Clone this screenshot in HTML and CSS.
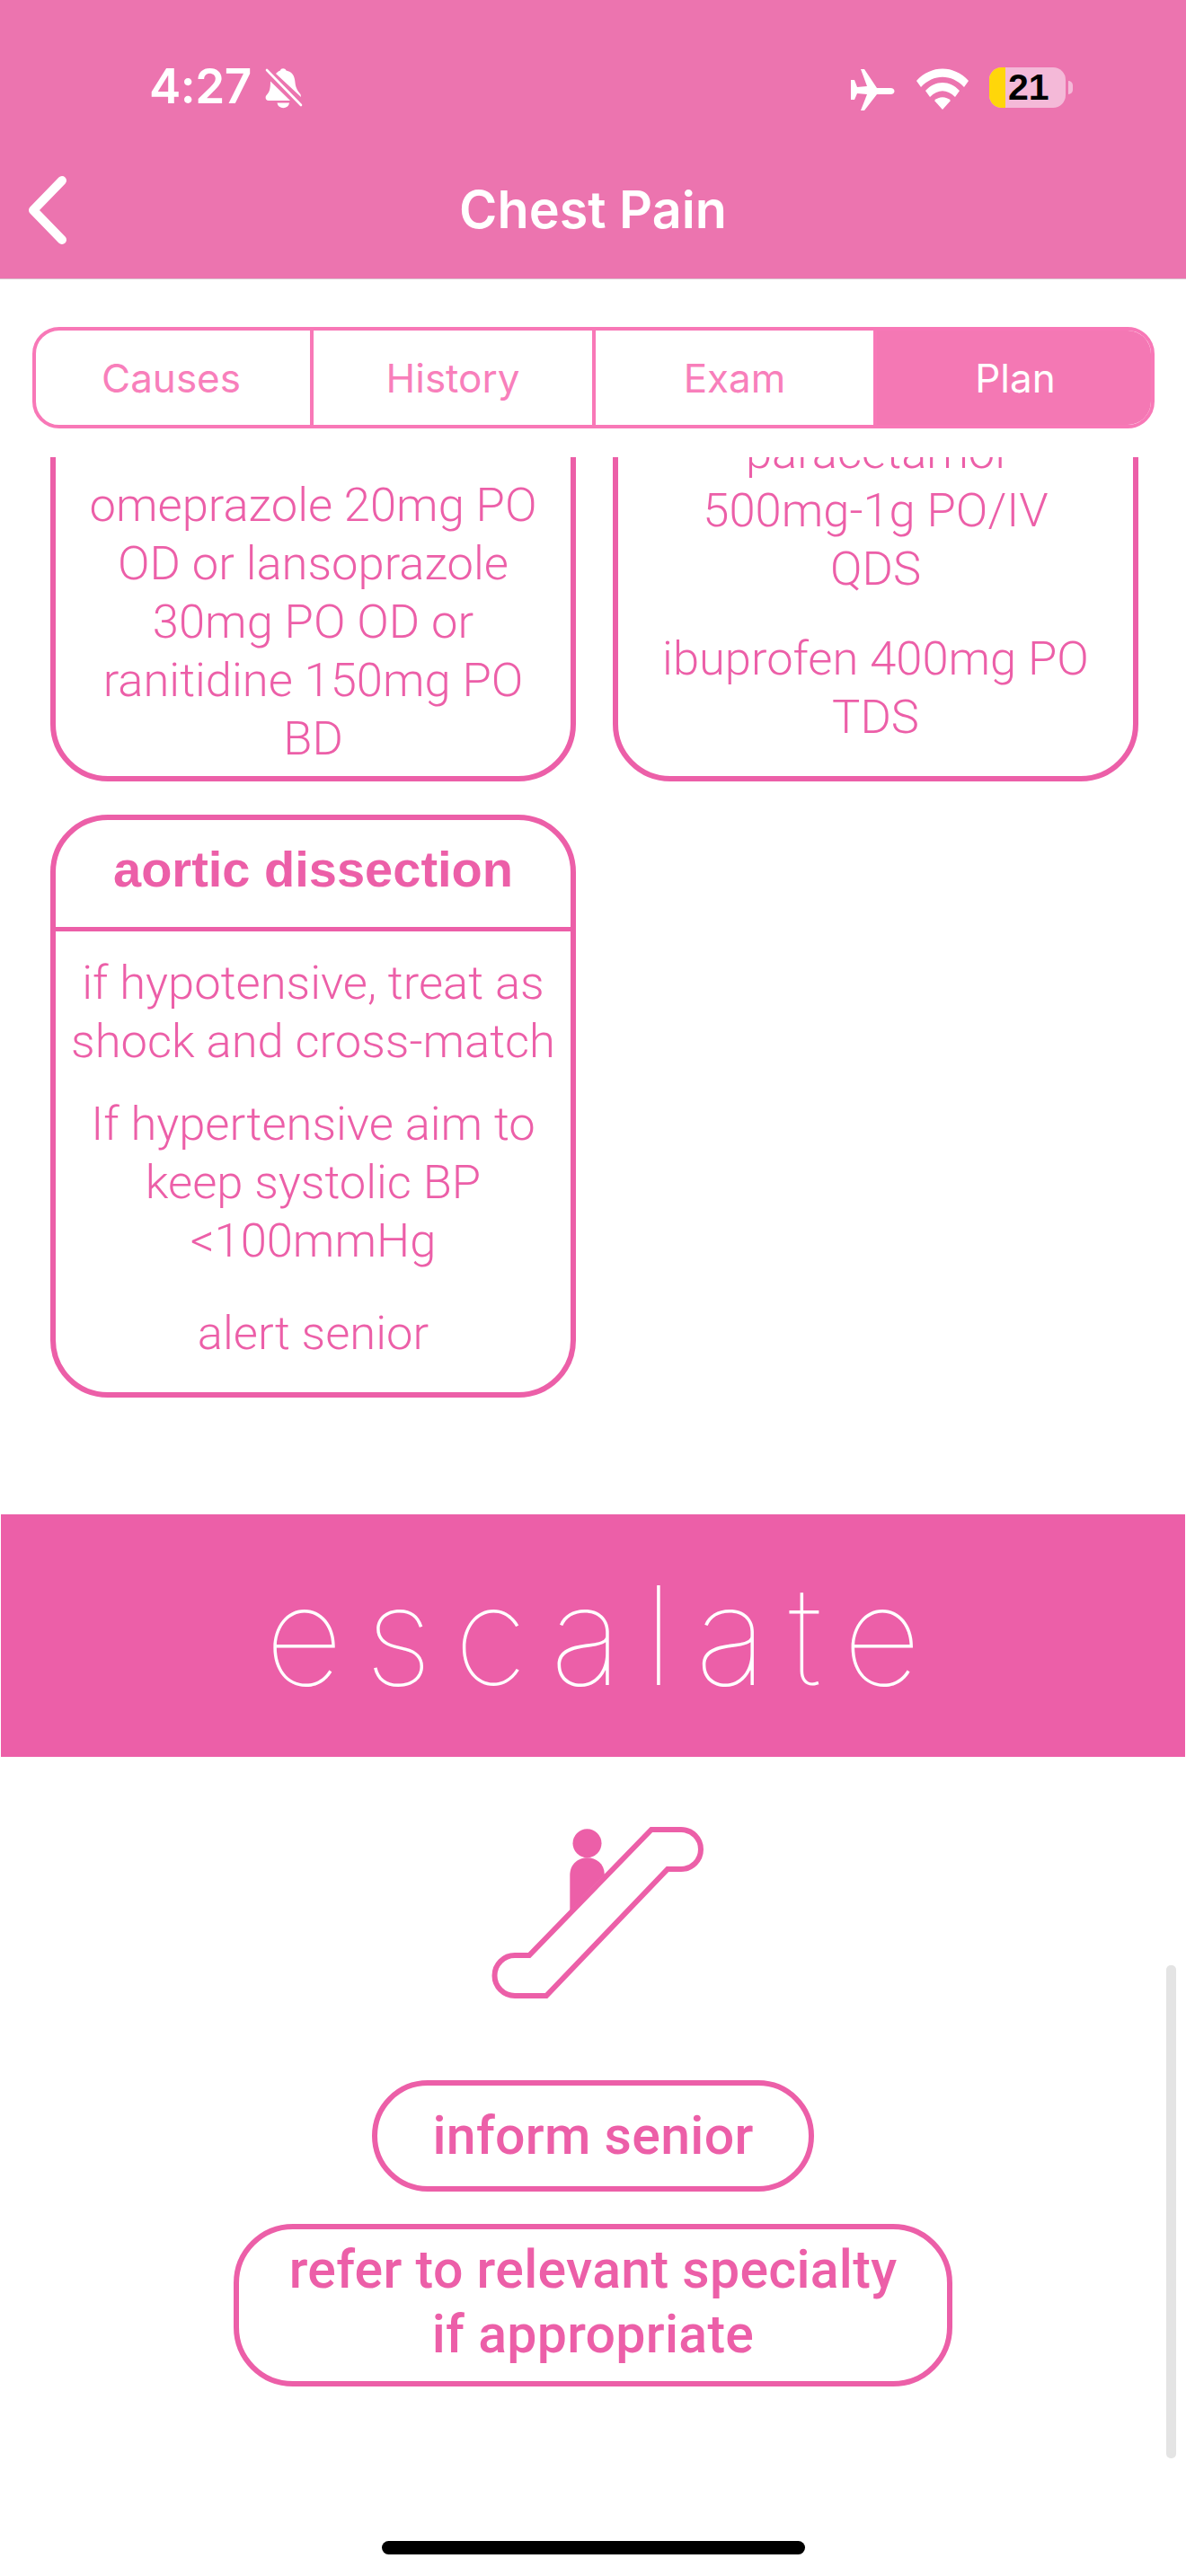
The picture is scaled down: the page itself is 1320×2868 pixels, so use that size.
FILE: index.html
```html
<!DOCTYPE html>
<html lang="en">
<head>
    <meta charset="UTF-8">
    <title>Chest Pain</title>
    <link rel="stylesheet" href="styles.css">
</head>
<body>
    <header class="top">
        <div class="status">
            <div class="status-left">
                <span class="time">4:27</span>
                <svg class="bell" viewBox="0 0 42 46">
                    <path d="M12 7C14 5 15 4 17 3.500C17.500 0.500 22.500 0.500 23.500 3.500C30 5 33 9 33.500 17C34 23 37 27 39.500 30L40 33Z" fill="#fff"/>
                    <path d="M6 15.500L28 37H4C0.500 37 -0.500 33 2 30.500C5 27 6 24 6 15.500Z" fill="#fff"/>
                    <path d="M13.500 39.500H27C26 47 14.500 47 13.500 39.500Z" fill="#fff"/>
                    <path d="M2 3L40 42" stroke="#fff" stroke-width="2.600" stroke-linecap="round"/>
                </svg>
            </div>
            <div class="status-right">
                <svg class="plane" viewBox="0 0 50 46">
                    <path d="M11 0H15L29 21H44C50 21 50 28 44 28H29L15 46H11L18 28L7 27L4 34H0V12H4L7 20L18 19Z" fill="#fff"/>
                </svg>
                <svg class="wifi" viewBox="0 0 58 46">
                    <path d="M0 14C16 -4 42 -4 58 14L53 21C39 6 19 6 5 21Z" fill="#fff"/>
                    <path d="M10 25C21 13 37 13 48 25L43 32C34 23 24 23 15 32Z" fill="#fff"/>
                    <path d="M20 36C25 31 33 31 38 36L29 46Z" fill="#fff"/>
                </svg>
                <div class="battery">
                    <div class="battery-body"><span class="battery-fill"></span><span class="battery-num">21</span></div>
                    <span class="battery-cap"></span>
                </div>
            </div>
        </div>
        <div class="navbar">
            <svg class="back" viewBox="0 0 44 76">
                <path d="M38 5L6 38L38 71" fill="none" stroke="#fff" stroke-width="10" stroke-linecap="round" stroke-linejoin="round"/>
            </svg>
            <h1>Chest Pain</h1>
        </div>
    </header>

    <nav class="tabs">
        <a href="#">Causes</a>
        <a href="#">History</a>
        <a href="#">Exam</a>
        <a href="#" class="active">Plan</a>
    </nav>

    <main class="scroll">
        <div class="cards">
            <section class="card card-cut card-left">
                <div class="card-body">
                    <p>omeprazole 20mg PO<br>OD or lansoprazole<br>30mg PO OD or<br>ranitidine 150mg PO<br>BD</p>
                </div>
            </section>
            <section class="card card-cut card-right">
                <div class="card-body">
                    <p>paracetamol<br>500mg-1g PO/IV<br>QDS</p>
                    <p>ibuprofen 400mg PO<br>TDS</p>
                </div>
            </section>
            <section class="card card-full">
                <h2>aortic dissection</h2>
                <div class="card-body">
                    <p>if hypotensive, treat as<br>shock and cross-match</p>
                    <p>If hypertensive aim to<br>keep systolic BP<br>&lt;100mmHg</p>
                    <p class="last">alert senior</p>
                </div>
            </section>
        </div>

        <div class="banner"><span>escalate</span></div>

        <svg class="escalator" viewBox="0 0 320 280">
            <circle cx="153.500" cy="72.300" r="16" fill="#ec5fa8"/>
            <path d="M134.300 147V108C134.300 82 172.500 82 172.800 107Z" fill="#ec5fa8"/>
            <path d="M225 57H258A22 22 0 0 1 258 101H243L108 242H73A22.500 22.500 0 0 1 73 197H89Z" fill="none" stroke="#ec5fa8" stroke-width="6"/>
        </svg>

        <div class="pills">
            <a href="#" class="pill pill-one">inform senior</a>
            <a href="#" class="pill pill-two">refer to relevant specialty<br>if appropriate</a>
        </div>
    </main>

    <div class="scrollbar"></div>
    <div class="home"></div>
</body>
</html>
```
FILE: styles.css
```css
html, body {
    margin: 0;
    padding: 0;
}
body {
    width: 1320px;
    height: 2868px;
    position: relative;
    overflow: hidden;
    background: #fff;
    font-family: 'Inter', sans-serif;
    color: #ec5fa8;
}
.top {
    height: 310px;
    background-color: #ec74af;
    border-bottom: 1px solid #d8c4ce;
}
.status {
    height: 183px;
    box-sizing: border-box;
    padding: 71px 0 0 166px;
    display: flex;
    justify-content: space-between;
}
.status-left {
    display: flex;
    align-items: flex-start;
}
.time {
    color: #fff;
    font-size: 53px;
    font-weight: 600;
    line-height: 50px;
    letter-spacing: -0.5px;
}
.bell {
    width: 42px;
    height: 46px;
    margin: 4px 0 0 15px;
}
.status-right {
    display: flex;
    align-items: flex-start;
    padding: 4px 126px 0 0;
}
.plane {
    width: 50px;
    height: 46px;
    margin-top: 2px;
}
.wifi {
    width: 58px;
    height: 46px;
    margin: 1px 0 0 23px;
}
.battery {
    display: flex;
    align-items: center;
    margin-left: 23px;
}
.battery-body {
    width: 85px;
    height: 45px;
    display: flex;
    border-radius: 14px;
    overflow: hidden;
    background: #f4b9d8;
}
.battery-fill {
    width: 18px;
    background: #ffd60a;
}
.battery-num {
    font-family: 'Liberation Sans', sans-serif;
    font-weight: 700;
    font-size: 41px;
    line-height: 45px;
    color: #000;
    margin-left: 3px;
}
.battery-cap {
    width: 5px;
    height: 15px;
    margin-left: 3px;
    border-radius: 0 5px 5px 0;
    background: #f4b9d8;
}
.navbar {
    height: 127px;
    display: flex;
    align-items: flex-start;
    position: relative;
    justify-content: center;
}
.back {
    position: absolute;
    left: 31px;
    top: 13px;
    width: 44px;
    height: 76px;
}
.navbar h1 {
    margin: 17px 0 0;
    color: #fff;
    font-size: 57.500px;
    line-height: 66px;
    font-weight: 600;
}
.tabs {
    margin: 53px 35px 0 36px;
    height: 113px;
    box-sizing: border-box;
    display: grid;
    grid-template-columns: 309px 314px 313px 1fr;
    border: 4px solid #f878b7;
    border-radius: 30px;
    overflow: hidden;
}
.tabs a {
    display: flex;
    align-items: center;
    justify-content: center;
    border-right: 4px solid #f878b7;
    color: #f87fbb;
    font-size: 44px;
    font-weight: 400;
    text-decoration: none;
}
.tabs a:first-child {
    padding-right: 4px;
}
.tabs a:last-child {
    border-right: none;
    padding-left: 3px;
}
.tabs a.active {
    background: #f478b4;
    color: #fff;
}
.scroll {
    height: 2359px;
    margin-top: 32px;
    overflow: hidden;
}
.cards {
    display: grid;
    grid-template-columns: 585px 585px;
    column-gap: 41px;
    row-gap: 37px;
    padding-left: 56px;
    margin-top: -70px;
}
.card {
    box-sizing: border-box;
    align-self: start;
    border: 6px solid #ec5fa8;
    border-radius: 64px;
    text-align: center;
}
.card-cut {
    height: 431px;
}
.card h2 {
    margin: 0;
    height: 124px;
    box-sizing: border-box;
    padding-top: 22px;
    border-bottom: 5px solid #ec5fa8;
    font-family: 'Liberation Sans', sans-serif;
    font-size: 56px;
    line-height: 66px;
    font-weight: 700;
}
.card-body {
    font-family: 'Roboto', sans-serif;
    font-size: 52.500px;
    font-weight: 300;
    line-height: 65px;
    white-space: nowrap;
}
.card-body p {
    margin: 0;
}
.card-left .card-body {
    padding-top: 85px;
}
.card-right .card-body {
    padding-top: 26px;
}
.card-right .card-body p + p {
    margin-top: 35px;
}
.card-full .card-body {
    padding: 25px 0 33px;
}
.card-full .card-body p + p {
    margin-top: 27px;
}
.card-full .card-body p.last {
    margin-top: 38px;
}
.banner {
    height: 270px;
    margin: 130px 1px 0;
    background: #ec5fa8;
    display: flex;
    align-items: center;
    justify-content: center;
}
.banner span {
    color: #fff;
    font-size: 152px;
    font-weight: 100;
    letter-spacing: 24.300px;
    line-height: 270px;
    margin-right: -24px;
}
.escalator {
    display: block;
    width: 320px;
    height: 280px;
    margin: 24px 0 0 500px;
}
.pills {
    display: flex;
    flex-direction: column;
    align-items: center;
    gap: 36px;
    margin-top: 56px;
}
.pill {
    box-sizing: border-box;
    border: 6px solid #ec5fa8;
    color: #ec5fa8;
    text-align: center;
    text-decoration: none;
    font-family: 'Roboto', sans-serif;
    font-weight: 500;
    font-size: 59px;
    letter-spacing: 0.300px;
    border-radius: 62px;
}
.pill-one {
    width: 492px;
    height: 124px;
    line-height: 112px;
}
.pill-two {
    width: 800px;
    height: 181px;
    line-height: 72px;
    padding-top: 9px;
    border-radius: 66px;
}
.scrollbar {
    position: absolute;
    right: 11px;
    top: 2188px;
    width: 11px;
    height: 549px;
    border-radius: 5px;
    background: #e4e4e4;
}
.home {
    position: absolute;
    left: 425px;
    top: 2829px;
    width: 471px;
    height: 15px;
    border-radius: 8px;
    background: #000;
}
```
